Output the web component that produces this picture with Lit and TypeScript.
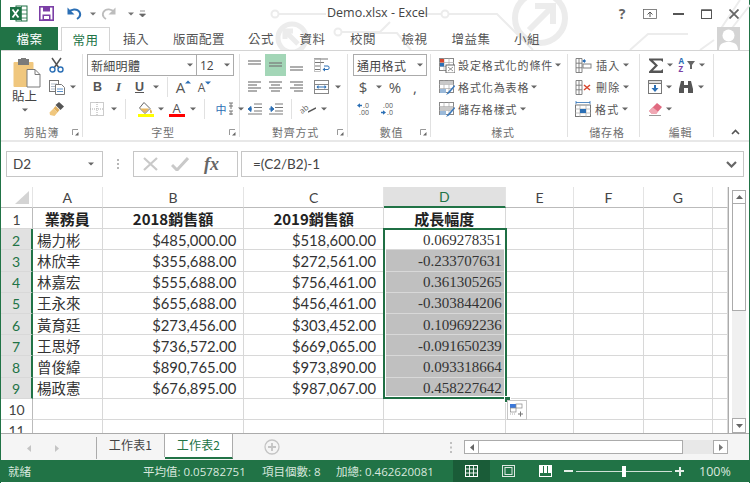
import { LitElement, html, css, svg } from "lit";
import { customElement } from "lit/decorators.js";

const ic = (w: number, h: number, body: unknown) =>
  html`<svg width=${w} height=${h} viewBox="0 0 ${w} ${h}">${body}</svg>`;
const arrow = html`<span class="a"><svg width="6" height="4" viewBox="0 0 6 4"><path d="M0 0.5h6L3 3.5z" fill="#666"/></svg></span>`;
const sep = html`<span class="sep"></span>`;
const L = "#777";
const lines3 = (xs: number[][]) =>
  ic(16, 14, svg`${xs.map((r) => svg`<path d="M${r[0]} ${r[1]}h${r[2]}" stroke=${L} stroke-width="1.2"/>`)}`);

const excelIcon = ic(18, 17, svg`<rect x="6" y="1" width="11" height="15" fill="#fff" stroke="#1e7145"/><path d="M11.5 1v15M6 5h11M6 9h11M6 13h11" stroke="#1e7145" stroke-width=".8"/><rect x="0" y="2" width="11" height="13" fill="#1e7145"/><path d="M2.5 4.5l6 8M8.5 4.5l-6 8" stroke="#fff" stroke-width="1.8"/>`);
const saveIcon = ic(15, 15, svg`<rect x=".8" y=".8" width="13.4" height="13.4" fill="none" stroke="#7b3fa6" stroke-width="1.6"/><rect x="4" y="1" width="7" height="4.5" fill="#7b3fa6"/><rect x="3.5" y="8.5" width="8" height="5.5" fill="#7b3fa6"/><rect x="5" y="10" width="5" height="3" fill="#fff"/>`);
const undoIcon = (c: string) => ic(15, 13, svg`<path d="M1.5 5.5 C4 2 10 1 12.5 5 C14 8 12.5 10.5 10 12" fill="none" stroke=${c} stroke-width="2"/><path d="M0.5 0.5v7h7z" fill=${c}/>`);
const redoIcon = ic(15, 13, svg`<g transform="translate(15 0) scale(-1 1)"><path d="M1.5 5.5 C4 2 10 1 12.5 5 C14 8 12.5 10.5 10 12" fill="none" stroke="#bdbdbd" stroke-width="1.8"/><path d="M0.5 0.5v7h7z" fill="#bdbdbd"/></g>`);

const pasteIcon = ic(29, 30, svg`<rect x="0.5" y="4" width="20" height="25" fill="#f0c77e" rx="1"/><rect x="5" y="1" width="11" height="6" fill="#7a7a7a"/><rect x="8" y="0" width="5" height="3" fill="#7a7a7a"/><path d="M14 11.5h8l5 5v12.5h-13z" fill="#fff" stroke="#7a7a7a"/><path d="M22 11.5v5h5" fill="none" stroke="#7a7a7a"/>`);
const cutIcon = ic(15, 16, svg`<path d="M3 1l7 10M12 1l-7 10" stroke="#555" stroke-width="1.5"/><circle cx="3.5" cy="12.5" r="2.5" fill="none" stroke="#2b6fb5" stroke-width="1.4"/><circle cx="11.5" cy="12.5" r="2.5" fill="none" stroke="#2b6fb5" stroke-width="1.4"/>`);
const copyIcon = ic(16, 15, svg`<rect x=".5" y=".5" width="9" height="11" fill="#fff" stroke="#777"/><path d="M2 4h6M2 6.5h6M2 9h4" stroke="#9ab" stroke-width=".8"/><path d="M6.5 4.5h6l3 3v7h-9z" fill="#fff" stroke="#777"/><path d="M8 9h6M8 11.5h6" stroke="#4a86c5" stroke-width=".9"/>`);
const painterIcon = ic(16, 16, svg`<path d="M10 1l5 4.5-3.5 3.5-5-5z" fill="#555"/><path d="M6.5 5l4 4-2 2.5-4-4z" fill="#e0b060"/><path d="M4.5 7.5L8.5 11.5 5.5 15 1 14 0.5 11.5z" fill="#f0c77e"/>`);

const aBig = (up: boolean) => html`<span class="growA ${up ? "lg" : "sm"}">A<svg width="6" height="4" viewBox="0 0 6 4"><path d=${up ? "M0 3.5l3-3 3 3z" : "M0 .5l3 3 3-3z"} fill="#2b6fb5"/></svg></span>`;
const borderIcon = ic(15, 14, svg`<rect x=".5" y=".5" width="13" height="13" fill="none" stroke="#999" stroke-dasharray="1 1"/><path d="M7 0v14M0 7h14" stroke="#aaa" stroke-dasharray="1 1"/>`);
const fillIcon = ic(16, 15, svg`<path d="M6 .5l6 6-5 5-5.5-5.5z" fill="#fff" stroke="#666"/><path d="M12.5 7c1 1.5 2 3 1 4s-2-.5-1-4z" fill="#e0a030"/><path d="M2 6.5h9l-4 4.5z" fill="#e8b860"/><rect x="0" y="12" width="16" height="3" fill="#ffff00"/>`);
const fontColor = html`<span class="fcolor">A</span>`;
const zhIcon = html`<span class="zh">中<svg width="6" height="14" viewBox="0 0 6 14"><path d="M1 1h4M1 4h4M3 1v6M1 9h4M1 12h4M3 9v4" stroke="#777"/></svg></span>`;

const a1 = lines3([[1, 3, 13], [1, 6, 13]]);
const wrapIcon = ic(16, 15, svg`<path d="M1 1h13M1 4.5h9M1 8h5M1 11.5h5" stroke="#777" stroke-width="1.2"/><rect x=".5" y=".5" width="6" height="13" fill="none" stroke="#999" stroke-width=".6"/><path d="M10 8h4c1.5 0 1.5 3.5 0 3.5H10" fill="none" stroke="#2b6fb5"/><path d="M11 9.5l-2.5 2 2.5 2z" fill="#2b6fb5"/>`);
const mergeIcon = ic(16, 15, svg`<rect x=".5" y=".5" width="14" height="13" fill="none" stroke="#888"/><path d="M0 4.5h15M0 9.5h15" stroke="#888"/><path d="M3 7h9" stroke="#2b6fb5"/><path d="M4.5 5l-2 2 2 2zM10.5 5l2 2-2 2z" fill="#2b6fb5"/>`);
const indent = (dec: boolean) => ic(16, 12, svg`<path d="M7 1h8M7 4.5h8M7 8h8M1 11h14" stroke="#777"/>${dec ? svg`<path d="M5 6h-3M1 6l3-2.5v5z" fill="#2b6fb5" stroke="#2b6fb5"/>` : svg`<path d="M1 6h3M6 6l-3-2.5v5z" fill="#2b6fb5" stroke="#2b6fb5"/>`}`);
const orientIcon = html`<span class="orient"><span>ab</span><svg width="8" height="6" viewBox="0 0 8 6"><path d="M0 5l8-4" stroke="#555" stroke-width="1.4"/></svg></span>`;
const decInc = html`<span class="dec"><span class="dr"><svg width="5" height="5" viewBox="0 0 5 5"><path d="M0 2.5l3-2.2v1.4h2v1.6h-2v1.4z" fill="#2b6fb5"/></svg>.0</span><span class="dr">.00</span></span>`;
const decDec = html`<span class="dec"><span class="dr">.00</span><span class="dr"><svg width="5" height="5" viewBox="0 0 5 5"><path d="M5 2.5l-3-2.2v1.4h-2v1.6h2v1.4z" fill="#2b6fb5"/></svg>.0</span></span>`;

const gridFill = svg`<rect x=".5" y=".5" width="14" height="12" fill="#fff" stroke="#888"/><path d="M0 4.5h15M0 8.5h15M5 0v13M10 0v13" stroke="#aaa" stroke-width=".7"/>`;
const condIcon = ic(16, 15, svg`${gridFill}<rect x="1" y="1" width="4" height="3.5" fill="#d8442c"/><rect x="1" y="5" width="4" height="3.5" fill="#2b6fb5"/><rect x="7" y="7" width="9" height="8" fill="#fff" stroke="#666"/><path d="M9 9l5 4M14 9l-5 4" stroke="#666" stroke-width=".7"/>`);
const tableIcon = ic(16, 15, svg`${gridFill}<rect x="1" y="1" width="13" height="3.5" fill="#c9c9c9"/><path d="M15.5 5L9 12l-2 3 3-1.5 6-7z" fill="#3a78bb"/><rect x="1" y="9" width="6" height="4" fill="#9ab9d9"/>`);
const cellStyleIcon = ic(16, 15, svg`${gridFill}<rect x="1" y="5" width="13" height="3.5" fill="#c9c9c9"/><path d="M15.5 5L9 12l-2 3 3-1.5 6-7z" fill="#3a78bb"/><rect x="1" y="9" width="6" height="4" fill="#9ab9d9"/>`);
const insIcon = ic(17, 15, svg`<path d="M1 .5h6v14H1zM1 5.2h6M1 9.8h6M4 .5v14" fill="#fff" stroke="#777" stroke-width=".9"/><rect x="8" y="6" width="8" height="4" fill="#fff" stroke="#777" stroke-width=".9"/><path d="M8 3h3" stroke="#2b6fb5" stroke-width="1.2"/><path d="M10 1L7 3l3 2z" fill="#2b6fb5"/>`);
const delIcon = ic(17, 15, svg`<path d="M1 .5h6v14H1zM1 5.2h6M1 9.8h6M4 .5v14" fill="#fff" stroke="#777" stroke-width=".9"/><path d="M9 5l6 5M15 5l-6 5" stroke="#d8442c" stroke-width="1.5"/>`);
const fmtIcon = ic(16, 16, svg`<rect x=".5" y="4" width="15" height="11.5" fill="#fff" stroke="#777"/><path d="M0 8h16M0 12h16M5 4v12M11 4v12" stroke="#aaa" stroke-width=".7"/><rect x="5" y="8" width="6" height="4" fill="#2b6fb5"/><path d="M1 1.5h14M1 0v3M15 0v3" stroke="#2b6fb5" stroke-width=".8"/>`);
const sigma = ic(16, 15, svg`<path d="M1 .5h14v3.5L13 2.5H5l5 5-5 5h8l2-1.5V15H1v-1.5L7 7.5 1 2z" fill="#555"/>`);
const sortIcon = html`<span class="sort"><span class="az"><span class="aa">A</span><span class="zz">Z</span></span><svg width="8" height="8" viewBox="0 0 8 8"><path d="M0 0h8L5 4v4H3V4z" fill="#666"/></svg></span>`;
const fillDown = ic(15, 15, svg`<rect x=".5" y=".5" width="13" height="13" fill="#fff" stroke="#777"/><path d="M.5 .5h13v3h-13z" fill="#ddd" stroke="#777"/><path d="M7 5v6" stroke="#2b6fb5" stroke-width="2"/><path d="M3.5 8l3.5 4 3.5-4z" fill="#2b6fb5"/>`);
const bino = ic(16, 14, svg`<path d="M3 1h3v4h4V1h3l2 8v4h-5V8H6v5H1V9z" fill="#555"/>`);
const eraser = ic(15, 14, svg`<path d="M9 1l5 4-6 7H4L1 9z" fill="#e06a80"/><path d="M1 9l3 3h4l2-2.5-5-4z" fill="#f0a8b4"/><path d="M1 13.5h12" stroke="#999"/>`);
const dlg = html`<svg class="dlg" width="7" height="7" viewBox="0 0 7 7"><path d="M.5 6V.5H6" fill="none" stroke="#999"/><path d="M6.5 6.5H3L6.5 3z" fill="#666"/></svg>`;

const rows = [
  ["楊力彬", "$485,000.00", "$518,600.00", "0.069278351"],
  ["林欣幸", "$355,688.00", "$272,561.00", "-0.233707631"],
  ["林嘉宏", "$555,688.00", "$756,461.00", "0.361305265"],
  ["王永來", "$655,688.00", "$456,461.00", "-0.303844206"],
  ["黃育廷", "$273,456.00", "$303,452.00", "0.109692236"],
  ["王思妤", "$736,572.00", "$669,065.00", "-0.091650239"],
  ["曾俊緯", "$890,765.00", "$973,890.00", "0.093318664"],
  ["楊政憲", "$676,895.00", "$987,067.00", "0.458227642"],
];

@customElement("app-root")
export class AppRoot extends LitElement {
  static styles = css`
    :host { display: block; width: 750px; height: 483px; overflow: hidden; background: #fff; font-family: "Noto Sans CJK TC", "Open Sans", sans-serif; color: #444; }
    .app { position: relative; width: 750px; height: 483px; box-sizing: border-box; border-left: 1px solid #217346; border-right: 1px solid #217346; display: flex; flex-direction: column; }
    .wm { position: absolute; left: -1px; top: 0; pointer-events: none; }
    svg { display: block; flex: none; }
    .title { position: relative; height: 27px; display: flex; align-items: center; flex: none; }
    .qat { display: flex; align-items: center; padding-left: 9px; }
    .q1 { width: 29px; } .q2 { width: 28px; } .q3 { width: 17px; } .q4 { width: 21px; } .q6 { width: 16px; }
    .qa { width: 17px; display: flex; justify-content: center; opacity: .9; }
    .titletext { position: absolute; left: 326px; top: 4px; font: 12.5px/18px "Open Sans", sans-serif; color: #444; }
    .wbtns { margin-left: auto; display: flex; align-items: center; height: 27px; padding-right: 1px; }
    .wb { width: 28px; display: flex; justify-content: center; align-items: center; }
    .q { font: 700 14px/16px "Open Sans", sans-serif; color: #666; }
    .tabs { position: relative; height: 23px; display: flex; flex: none; border-bottom: 1px solid #d4d4d4; box-sizing: content-box; }
    .tab { font-size: 12.5px; line-height: 23px; letter-spacing: .5px; color: #555; text-align: center; flex: none; }
    .file { width: 57px; background: #217346; color: #fff; margin-right: 3px; }
    .home { width: 49px; height: 24px; box-sizing: border-box; border: 1px solid #d4d4d4; border-bottom: none; background: #fff; color: #217346; margin-right: 1px; }
    .t1 { width: 50px; } .t2 { width: 76px; } .t3 { width: 48px; } .t4 { width: 55px; } .t5 { width: 46px; } .t6 { width: 57px; } .t7 { width: 56px; } .t8 { width: 56px; }
    .avatar { position: absolute; left: 716px; top: 0; width: 23px; height: 23px; background: #d4d4d4; overflow: hidden; }
    .ribbon { position: relative; height: 86px; padding-top: 3px; display: flex; flex: none; border-bottom: 2px solid #e8e8e8; background: #fff; box-sizing: content-box; }
    .grp { position: relative; height: 83px; display: flex; flex-direction: column; border-right: 1px solid #e1e1e1; box-sizing: border-box; flex: none; }
    .body { height: 73px; display: flex; flex: none; }
    .lbl { text-align: center; font-size: 11px; line-height: 10px; color: #707070; letter-spacing: .8px; }
    .dlg { position: absolute; right: 3px; bottom: 1px; }
    .g1 { width: 82px; } .g2 { width: 157px; padding-left: 4px; } .g3 { width: 108px; padding-left: 4px; } .g4 { width: 83px; padding-left: 5px; } .g5 { width: 137px; padding-left: 8px; } .g6 { width: 72px; padding-left: 7px; } .g7 { width: 74px; padding-left: 8px; }
    .paste { width: 45px; display: flex; flex-direction: column; align-items: center; padding-top: 4px; font-size: 12.5px; line-height: 16px; color: #444; padding-left: 2px; box-sizing: border-box; }
    .paste > svg { margin-left: 5px; }
    .paste .a { margin-top: 1px; height: 8px; }
    .rows3 { display: grid; grid-template-rows: 22px 22px 22px; }
    .r { display: flex; align-items: center; }
    .b { width: 21px; height: 22px; display: flex; align-items: center; justify-content: center; flex: none; font-size: 12.5px; color: #555; }
    .b20 { width: 20px; }
    .hl { background: #a3d6b7; }
    .a { width: 12px; display: flex; justify-content: center; align-items: center; flex: none; }
    .a10 { width: 10px; }
    .sep { width: 1px; height: 20px; background: #e1e1e1; margin: 0 5px; flex: none; }
    .ml4 { margin-left: 4px; }
    .combo { height: 22px; box-sizing: border-box; border: 1px solid #ababab; background: #fff; display: flex; align-items: center; font-size: 12px; color: #444; padding-left: 3px; justify-content: space-between; }
    .cfont { width: 110px; letter-spacing: .3px; } .csize { width: 38px; margin-left: -1px; font-family: "Open Sans"; }
    .cnum { width: 74px; letter-spacing: .3px; }
    .bold { font: 700 12.5px "Liberation Sans"; }
    .ital { font: italic 700 13px "Liberation Serif"; }
    .und { font: 700 12.5px "Liberation Sans"; text-decoration: underline; }
    .bigsym { font: 15px "Open Sans"; }
    .growA { display: flex; align-items: flex-start; color: #555; font-family: "Open Sans"; line-height: 16px; }
    .growA.lg { font-size: 15px; } .growA.sm { font-size: 12px; padding-top: 1px; }
    .growA svg { margin-top: 1px; }
    .fcolor { width: 16px; height: 15px; box-sizing: border-box; border-bottom: 3px solid #f00; font: 13px/12px "Open Sans"; color: #555; text-align: center; }
    .zh { display: flex; align-items: center; gap: 1px; color: #2b6fb5; font-size: 11px; line-height: 14px; }
    .orient { display: flex; align-items: flex-end; font: 8px/8px "Open Sans"; color: #666; }
    .orient span { display: block; transform: rotate(-40deg); }
    .dec { display: flex; flex-direction: column; align-items: flex-end; font: 7px/7px "Open Sans"; color: #555; }
    .dr { display: flex; align-items: center; gap: 1px; }
    .sort { display: flex; align-items: center; gap: 0; }
    .az { display: flex; flex-direction: column; font: 700 8px/8px "Open Sans"; width: 8px; }
    .aa { color: #2b6fb5; } .zz { color: #7b3fa6; }
    .li { display: flex; align-items: center; gap: 3px; font-size: 11px; letter-spacing: .9px; color: #555; height: 22px; white-space: nowrap; }
    .li .a { width: 8px; margin-left: -2px; }
    .g6 .li { gap: 4px; letter-spacing: 1.2px; }
    .collapse { position: absolute; left: 730px; top: 78px; }
    .fbar { height: 45px; flex: none; display: flex; padding: 9px 5px 0 5px; box-sizing: border-box; background: #fff; }
    .name { width: 97px; height: 26px; box-sizing: border-box; border: 1px solid #c6c6c6; display: flex; align-items: center; justify-content: space-between; padding: 0 5px 0 6px; font: 13.5px "Lato", sans-serif; color: #444; flex: none; }
    .dots { width: 30px; display: flex; justify-content: center; align-items: center; height: 26px; flex: none; }
    .fbtn { width: 105px; height: 26px; box-sizing: border-box; border: 1px solid #c6c6c6; display: flex; align-items: center; padding-left: 9px; gap: 13px; flex: none; }
    .fx { font: italic 700 18px "Liberation Serif"; color: #666; margin-left: 2px; }
    .input { flex: 1; margin-left: 3px; height: 26px; box-sizing: border-box; border: 1px solid #c6c6c6; display: flex; align-items: center; justify-content: space-between; padding: 0 6px 0 11px; font: 13.5px "Lato", sans-serif; color: #444; }
    .sheet { position: relative; height: 246px; flex: none; overflow: hidden; display: flex; }
    .grid { display: grid; grid-template-columns: 32px 69.7px 141.6px 139.7px 121.7px 68.6px 69.4px 69.3px 15px; grid-template-rows: 21px repeat(11, 21.2px); width: 727px; flex: none; border-right: 1px solid #ababab; box-sizing: content-box; }
    .h { background: #fff; display: flex; align-items: center; justify-content: center; font: 14px "Lato", sans-serif; color: #444; border-right: 1px solid #e4e4e4; border-bottom: 1px solid #bbb; box-sizing: border-box; }
    .h.on { background: #e1e1e1; color: #217346; border-bottom: 2px solid #217346; }
    .corner { align-items: flex-end; justify-content: flex-end; padding: 0 3px 3px 0; }
    .rh { display: flex; align-items: center; justify-content: center; font: 14px "Lato", sans-serif; color: #444; border-right: 1px solid #bbb; border-bottom: 1px solid #d8d8d8; box-sizing: border-box; padding-top: 2px; }
    .rh.on { background: #e1e1e1; color: #217346; border-right: 2px solid #217346; }
    .c { border-right: 1px solid #d8d8d8; border-bottom: 1px solid #d8d8d8; box-sizing: border-box; display: flex; align-items: center; font: 14.8px "Lato", sans-serif; color: #333; white-space: nowrap; overflow: hidden; }
    .c.hd { justify-content: center; font: 700 15px "Noto Sans CJK TC", sans-serif; color: #222; letter-spacing: 0; }
    .c.nm { font: 14.5px "Noto Sans CJK TC", sans-serif; padding-left: 4px; }
    .c.num { justify-content: flex-end; padding-right: 7px; padding-top: 1px; }
    .c.d { justify-content: flex-end; padding-right: 3px; padding-top: 2px; font: 15px "Liberation Serif", serif; }
    .c.s { background: #c0c0c0; }
    .sel { position: absolute; left: 382px; top: 41px; width: 123.5px; height: 171px; box-sizing: border-box; border: 2px solid #1f6f44; box-shadow: inset 0 0 0 1px #fff; }
    .handle { position: absolute; left: 502.5px; top: 209px; width: 5px; height: 5px; background: #1f6f44; border: 1px solid #fff; box-sizing: content-box; }
    .popt { position: absolute; left: 506px; top: 213px; width: 20px; height: 20px; box-sizing: border-box; background: #fff; border: 1px solid #c6c6c6; padding: 2px; }
    .vs { width: 14px; margin-left: 3px; flex: none; padding-top: 3px; box-sizing: content-box; display: flex; flex-direction: column; }
    .sb { height: 14px; box-sizing: border-box; border: 1px solid #ababab; display: flex; align-items: center; justify-content: center; background: #fff; flex: none; }
    .vth { height: 107px; flex: none; box-sizing: border-box; border: 1px solid #ababab; border-top: none; background: #fff; }
    .vtr { flex: 1; background: #f0f0f0; }
    .vdn { height: 15px; }
    .tabbar { height: 27px; flex: none; box-sizing: border-box; border-top: 1px solid #ababab; background: #f5f5f5; display: flex; align-items: flex-start; }
    .nav { width: 96px; height: 22px; margin-top: 3px; display: flex; align-items: center; padding-left: 26px; gap: 24px; box-sizing: border-box; border-right: 1px solid #ababab; flex: none; }
    .st { width: 67px; height: 23px; font-size: 12px; text-align: center; line-height: 22px; color: #444; flex: none; border-right: 1px solid #ababab; box-sizing: content-box; letter-spacing: .2px; }
    .st.act { background: #fff; color: #217346; border-bottom: 2px solid #217346; margin-top: 0; }
    .plus { width: 18px; height: 26px; margin-left: 31px; display: flex; align-items: center; flex: none; }
    .tdots { height: 26px; margin-left: 168px; display: flex; align-items: center; flex: none; }
    .hs { margin-left: 12px; margin-top: 6px; display: flex; height: 14px; flex: none; background: #e8e8e8; }
    .hb { width: 15px; height: 14px; }
    .hth { width: 204px; height: 14px; box-sizing: border-box; border: 1px solid #ababab; border-left: none; background: #fff; }
    .htr { width: 30px; }
    .status { height: 22px; flex: none; background: #217346; color: #d9e8df; display: flex; align-items: center; font: 11.5px "Open Sans", "Noto Sans CJK TC", sans-serif; position: relative; }
    .status span.t { flex: none; white-space: nowrap; }
    .s0 { margin-left: 7px; width: 135px; font-family: "Noto Sans CJK TC"; }
    .s1 { width: 119px; } .s2 { width: 74px; } .s3 { width: 117px; }
    .vw { width: 37px; height: 22px; display: flex; align-items: center; justify-content: center; flex: none; }
    .vw.on { background: #1a5c38; }
    .zoom { display: flex; align-items: center; flex: none; }
    .zm { width: 9px; height: 2px; background: #e6efe9; flex: none; }
    .track { position: relative; width: 96px; height: 1px; background: #cfe0d6; margin: 0 3px; flex: none; }
    .thumb { position: absolute; left: 46px; top: -5px; width: 4px; height: 11px; background: #fff; }
    .zp { position: relative; width: 9px; height: 9px; flex: none; }
    .zp::before { content: ""; position: absolute; left: 0; top: 3.5px; width: 9px; height: 2px; background: #e6efe9; }
    .zp::after { content: ""; position: absolute; left: 3.5px; top: 0; width: 2px; height: 9px; background: #e6efe9; }
    .pct { margin-left: 15px; flex: none; font-size: 12.5px; }
    .bottom { flex: 1; background: #fff; }
  `;

  render() {
    const cols = ["A", "B", "C", "D", "E", "F", "G", ""];
    const empty = (n: number) => Array.from({ length: n }, () => html`<div class="c"></div>`);
    return html`<div class="app">
      <svg class="wm" width="750" height="50" viewBox="0 0 750 50" fill="none" stroke="#ececec" stroke-width="2">
        <circle cx="275" cy="14" r="3.5"/><path d="M279 14h47"/>
        <circle cx="292" cy="38" r="14" stroke-width="5"/><path d="M298 44L285 31M285 39v-8h8" stroke-width="5"/>
        <circle cx="338" cy="32" r="3.5"/><path d="M342 32h38l10-10"/>
        <path d="M422 14h19M449 14h48l36 36"/><circle cx="445" cy="14" r="3.5"/>
        <path d="M375 33h22l14 17"/>
        <circle cx="540" cy="18" r="25" stroke-width="6"/><path d="M529 30L553 6M535 6h18v18" stroke-width="6"/>
        <path d="M630 50l18-16h40M740 0l-20 30M750 5l-25 32M700 50l14-10"/>
      </svg>
      <div class="title">
        <div class="qat">
          <span class="q1">${excelIcon}</span><span class="q2">${saveIcon}</span>
          <span class="q3">${undoIcon("#2b6fb5")}</span><span class="qa">${arrow}</span>
          <span class="q4">${redoIcon}</span><span class="qa">${arrow}</span>
          <span class="q6"><svg width="7" height="8" viewBox="0 0 7 8"><path d="M1 1h5M0.5 4h6L3.5 7z" stroke="#666" fill="#666" stroke-width=".7"/></svg></span>
        </div>
        <div class="titletext">Demo.xlsx - Excel</div>
        <div class="wbtns">
          <span class="wb q">?</span>
          <span class="wb">${ic(14, 10, svg`<rect x=".5" y=".5" width="13" height="9" fill="#fff" stroke="#666" stroke-width=".8"/><path d="M7 8V3.5M4.5 5.5L7 3l2.5 2.5" stroke="#555" fill="none"/>`)}</span>
          <span class="wb">${ic(11, 2, svg`<rect width="11" height="2" fill="#555"/>`)}</span>
          <span class="wb">${ic(11, 10, svg`<rect x=".5" y="1" width="10" height="8.5" fill="none" stroke="#555"/><rect x=".5" y=".5" width="10" height="1.5" fill="#555"/>`)}</span>
          <span class="wb">${ic(10, 10, svg`<path d="M.5 .5l9 9M9.5 .5l-9 9" stroke="#666" stroke-width="1.8"/>`)}</span>
        </div>
      </div>
      <div class="tabs">
        <div class="tab file">檔案</div>
        <div class="tab home">常用</div>
        <div class="tab t1">插入</div><div class="tab t2">版面配置</div><div class="tab t3">公式</div>
        <div class="tab t4">資料</div><div class="tab t5">校閱</div><div class="tab t6">檢視</div>
        <div class="tab t7">增益集</div><div class="tab t8">小組</div>
        <div class="avatar"><svg width="23" height="23" viewBox="0 0 23 23"><circle cx="11.5" cy="8.5" r="6" fill="#fff" /><path d="M2 23c0-6 4-8 9.5-8s9.5 2 9.5 8z" fill="#fff"/></svg></div>
      </div>
      <div class="ribbon">
        <div class="grp g1">
          <div class="body">
            <div class="paste">${pasteIcon}<span>貼上</span><span class="a">${arrow}</span></div>
            <div class="rows3">
              <span class="b">${cutIcon}</span>
              <span class="r"><span class="b">${copyIcon}</span>${arrow}</span>
              <span class="b">${painterIcon}</span>
            </div>
          </div>
          <div class="lbl">剪貼簿</div>${dlg}
        </div>
        <div class="grp g2">
          <div class="body"><div class="rows3">
            <div class="r"><div class="combo cfont"><span>新細明體</span>${arrow}</div><div class="combo csize"><span>12</span>${arrow}</div></div>
            <div class="r"><span class="b bold">B</span><span class="b ital">I</span><span class="b und">U</span>${arrow}${sep}<span class="b">${aBig(true)}</span><span class="b">${aBig(false)}</span></div>
            <div class="r"><span class="b">${borderIcon}</span>${arrow}${sep}<span class="b ml4">${fillIcon}</span><span class="a a10">${arrow}</span><span class="b">${fontColor}</span>${arrow}${sep}<span class="b ml4">${zhIcon}</span>${arrow}</div>
          </div></div>
          <div class="lbl">字型</div>${dlg}
        </div>
        <div class="grp g3">
          <div class="body"><div class="rows3">
            <div class="r"><span class="b">${a1}</span><span class="b hl">${lines3([[1, 5, 13], [1, 8, 13]])}</span><span class="b">${lines3([[1, 9, 13], [1, 12, 13]])}</span><span class="b ml4">${wrapIcon}</span></div>
            <div class="r"><span class="b">${lines3([[1, 2, 13], [1, 5, 9], [1, 8, 13], [1, 11, 9]])}</span><span class="b">${lines3([[1, 2, 13], [3, 5, 9], [1, 8, 13], [3, 11, 9]])}</span><span class="b">${lines3([[1, 2, 13], [5, 5, 9], [1, 8, 13], [5, 11, 9]])}</span><span class="b ml4">${mergeIcon}</span>${arrow}</div>
            <div class="r"><span class="b">${indent(true)}</span><span class="b">${indent(false)}</span>${sep}<span class="b">${orientIcon}</span>${arrow}</div>
          </div></div>
          <div class="lbl">對齊方式</div>${dlg}
        </div>
        <div class="grp g4">
          <div class="body"><div class="rows3">
            <div class="r"><div class="combo cnum"><span>通用格式</span>${arrow}</div></div>
            <div class="r"><span class="b b20 bigsym">$</span>${arrow}<span class="b b20 bigsym">%</span><span class="b b20 bigsym">,</span></div>
            <div class="r"><span class="b b20">${decInc}</span><span class="b b20 ml4">${decDec}</span></div>
          </div></div>
          <div class="lbl">數值</div>${dlg}
        </div>
        <div class="grp g5">
          <div class="body"><div class="rows3">
            <div class="li">${condIcon}<span>設定格式化的條件</span>${arrow}</div>
            <div class="li">${tableIcon}<span>格式化為表格</span>${arrow}</div>
            <div class="li">${cellStyleIcon}<span>儲存格樣式</span>${arrow}</div>
          </div></div>
          <div class="lbl">樣式</div>
        </div>
        <div class="grp g6">
          <div class="body"><div class="rows3">
            <div class="li">${insIcon}<span>插入</span>${arrow}</div>
            <div class="li">${delIcon}<span>刪除</span>${arrow}</div>
            <div class="li">${fmtIcon}<span>格式</span>${arrow}</div>
          </div></div>
          <div class="lbl">儲存格</div>
        </div>
        <div class="grp g7">
          <div class="body"><div class="rows3">
            <div class="r">${sigma}${arrow}<span class="b">${sortIcon}</span><span class="a a10">${arrow}</span></div>
            <div class="r">${fillDown}${arrow}<span class="b">${bino}</span><span class="a a10">${arrow}</span></div>
            <div class="r">${eraser}${arrow}</div>
          </div></div>
          <div class="lbl">編輯</div>
        </div>
        <svg class="collapse" width="9" height="6" viewBox="0 0 9 6"><path d="M1 5l3.5-3.5L8 5" fill="none" stroke="#555" stroke-width="1.6"/></svg>
      </div>
      <div class="fbar">
        <div class="name"><span>D2</span>${arrow}</div>
        <div class="dots"><svg width="2" height="10" viewBox="0 0 2 10"><path d="M1 0v2M1 4v2M1 8v2" stroke="#999" stroke-width="1.4"/></svg></div>
        <div class="fbtn">
          ${ic(15, 14, svg`<path d="M1 1l13 12M14 1L1 13" stroke="#c9c9c9" stroke-width="2.2"/>`)}
          ${ic(18, 14, svg`<path d="M1 8l5 5L17 1" fill="none" stroke="#c9c9c9" stroke-width="3"/>`)}
          <span class="fx">fx</span>
        </div>
        <div class="input"><span>=(C2/B2)-1</span><svg width="11" height="7" viewBox="0 0 11 7"><path d="M1 1l4.5 4.5L10 1" fill="none" stroke="#666" stroke-width="2.2"/></svg></div>
      </div>
      <div class="sheet">
        <div class="grid">
          <div class="h corner"><svg width="14" height="13" viewBox="0 0 14 13"><path d="M14 0v13H0z" fill="#d4d4d4"/></svg></div>
          ${cols.map((c) => html`<div class="h ${c === "D" ? "on" : ""}">${c}</div>`)}
          <div class="rh">1</div>
          <div class="c hd">業務員</div><div class="c hd">2018銷售額</div><div class="c hd">2019銷售額</div><div class="c hd">成長幅度</div>
          ${empty(4)}
          ${rows.map((r, i) => html`
            <div class="rh on">${i + 2}</div>
            <div class="c nm">${r[0]}</div><div class="c num">${r[1]}</div><div class="c num">${r[2]}</div>
            <div class="c d ${i > 0 ? "s" : ""}">${r[3]}</div>
            ${empty(4)}`)}
          <div class="rh">10</div>${empty(8)}
          <div class="rh">11</div>${empty(8)}
        </div>
        <div class="sel"></div><div class="handle"></div>
        <div class="popt"><svg width="14" height="14" viewBox="0 0 14 14"><rect x="0" y="1" width="6" height="4" fill="#3a78db"/><rect x="6" y="1" width="6" height="4" fill="#fff" stroke="#888" stroke-width=".7"/><rect x=".5" y="5" width="5.5" height="4" fill="#fff" stroke="#888" stroke-width=".7"/><path d="M0 11h6" stroke="#aaa" stroke-dasharray="1 1"/><path d="M8 11h5M10.5 8.5v5" stroke="#777"/></svg></div>
        <div class="vs">
          <div class="sb"><svg width="7" height="4" viewBox="0 0 7 4"><path d="M0 4h7L3.5 0z" fill="#666"/></svg></div>
          <div class="vth"></div>
          <div class="vtr"></div>
          <div class="sb vdn"><svg width="7" height="4" viewBox="0 0 7 4"><path d="M0 0h7L3.5 4z" fill="#666"/></svg></div>
        </div>
      </div>
      <div class="tabbar">
        <div class="nav">
          <svg width="4" height="7" viewBox="0 0 4 7"><path d="M4 0v7L0 3.5z" fill="#c4c4c4"/></svg>
          <svg width="4" height="7" viewBox="0 0 4 7"><path d="M0 0v7l4-3.5z" fill="#c4c4c4"/></svg>
        </div>
        <div class="st">工作表1</div>
        <div class="st act">工作表2</div>
        <div class="plus"><svg width="16" height="16" viewBox="0 0 16 16"><circle cx="8" cy="8" r="7" fill="none" stroke="#c4c4c4" stroke-width="1.3"/><path d="M4 8h8M8 4v8" stroke="#c4c4c4" stroke-width="1.8"/></svg></div>
        <div class="tdots"><svg width="2" height="11" viewBox="0 0 2 11"><path d="M1 0v2M1 4.5v2M1 9v2" stroke="#aaa" stroke-width="1.4"/></svg></div>
        <div class="hs">
          <div class="sb hb"><svg width="4" height="7" viewBox="0 0 4 7"><path d="M4 0v7L0 3.5z" fill="#666"/></svg></div>
          <div class="hth"></div>
          <div class="htr"></div>
          <div class="sb hb"><svg width="4" height="7" viewBox="0 0 4 7"><path d="M0 0v7l4-3.5z" fill="#777"/></svg></div>
        </div>
      </div>
      <div class="status">
        <span class="t s0">就緒</span>
        <span class="t s1">平均值: 0.05782751</span>
        <span class="t s2">項目個數: 8</span>
        <span class="t s3">加總: 0.462620081</span>
        <span class="vw on"><svg width="13" height="12" viewBox="0 0 13 12"><rect x=".5" y=".5" width="12" height="11" fill="none" stroke="#fff"/><path d="M0 4h13M0 8h13M4.5 0v12M8.5 0v12" stroke="#fff" stroke-width=".9"/></svg></span>
        <span class="vw"><svg width="13" height="12" viewBox="0 0 13 12"><rect x=".5" y=".5" width="12" height="11" fill="none" stroke="#dfe9e3"/><rect x="3" y="2.5" width="7" height="7" fill="none" stroke="#dfe9e3"/></svg></span>
        <span class="vw"><svg width="13" height="12" viewBox="0 0 13 12"><rect x=".5" y=".5" width="12" height="11" fill="none" stroke="#fff"/><path d="M1 1h3v7H1zM5 1h3v7H5zM9 1h3v7H9z" fill="#fff"/></svg></span>
        <span class="zoom">
          <span class="zm"></span><span class="track"><span class="thumb"></span></span><span class="zp"></span>
          <span class="pct">100%</span>
        </span>
      </div>
      <div class="bottom"></div>
    </div>`;
  }
}
